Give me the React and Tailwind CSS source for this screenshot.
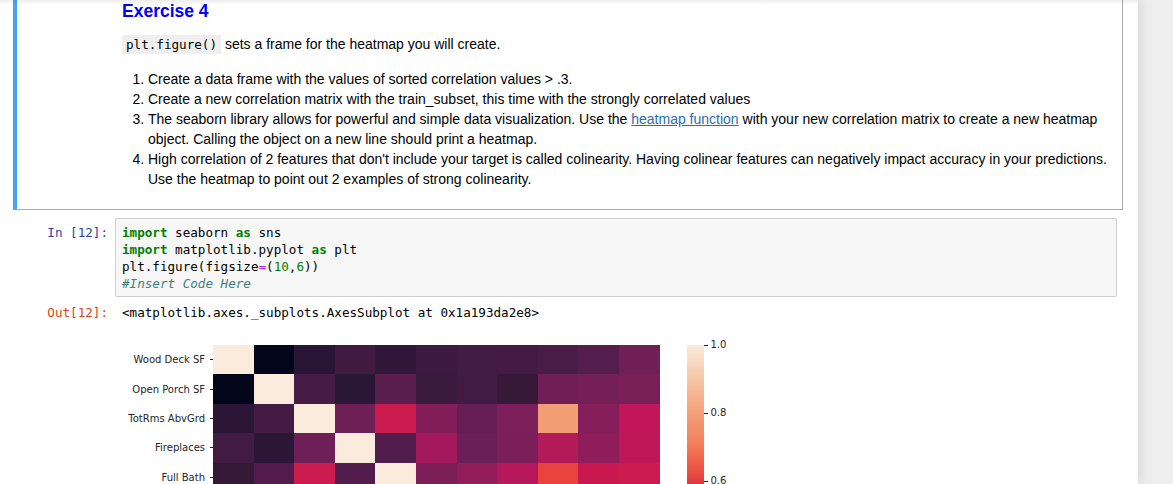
import React from 'react';

// colours read off the seaborn "rocket" heatmap, one row per feature
const CELLS = [
  ['#faebdd', '#03051a', '#291636', '#401a41', '#30173a', '#3d1a42', '#421b44', '#441b45', '#4a1c48', '#531d4d', '#701f57'],
  ['#03051a', '#faebdd', '#461b45', '#2a1636', '#5a1e4f', '#3b1a40', '#421b44', '#361839', '#721f57', '#741f58', '#7b1f59'],
  ['#2b1637', '#441b44', '#faebdd', '#6d1f56', '#cb1b4f', '#841e5a', '#651f54', '#7c1f5a', '#f49e76', '#851e5a', '#c1175a'],
  ['#411b43', '#2b1637', '#6f1f57', '#faebdd', '#511d4c', '#a3195b', '#6a1f56', '#7a1f59', '#b31a59', '#8f1d5b', '#be1858'],
  ['#361839', '#521d4d', '#cb1b4f', '#521d4d', '#faebdd', '#7c1f59', '#931c5b', '#b6185b', '#e8433f', '#c8184f', '#cc1c4f'],
];

const LABELS = ['Wood Deck SF', 'Open Porch SF', 'TotRms AbvGrd', 'Fireplaces', 'Full Bath'];
const TICKS = ['1.0', '0.8', '0.6'];

const kw = 'font-bold text-[#008000]';

export default function App() {
  return (
    <div className="flex h-[484px] overflow-hidden bg-[#eeeeee] font-['Liberation_Sans',Arial,sans-serif] text-[14px] text-black">
      <div className="relative w-[1138px] shrink-0 bg-white pl-[12px] pr-[15px] shadow-[0_0_12px_1px_rgba(87,87,87,0.2)]">
        <div className="pointer-events-none absolute inset-x-0 top-0 h-[5px] bg-gradient-to-b from-black/[0.07] to-transparent" />

        {/* Markdown cell (selected) */}
        <div className="ml-[1px] border border-t-0 border-[#ababab] border-l-[4px] border-l-[#42a5f5] pb-[20px] pl-[105px] pr-[6px]">
          <h3 className="text-[17.5px] font-bold leading-[22px] text-[#0000ff]">Exercise 4</h3>
          <p className="mt-[12px] leading-[20px]">
            <code className="bg-[#efefef] px-[4px] py-[2px] font-['DejaVu_Sans_Mono',monospace] text-[12.6px]">plt.figure()</code>{' '}
            sets a frame for the heatmap you will create.
          </p>
          <ol className="mt-[14px] list-decimal pl-[26px] leading-[20px]">
            <li>Create a data frame with the values of sorted correlation values &gt; .3.</li>
            <li>Create a new correlation matrix with the train_subset, this time with the strongly correlated values</li>
            <li>
              The seaborn library allows for powerful and simple data visualization. Use the{' '}
              <a className="text-[#296eaa] underline">heatmap function</a> with your new correlation matrix to create a new
              heatmap object. Calling the object on a new line should print a heatmap.
            </li>
            <li>
              High correlation of 2 features that don't include your target is called colinearity. Having colinear features
              can negatively impact accuracy in your predictions. Use the heatmap to point out 2 examples of strong
              colinearity.
            </li>
          </ol>
        </div>

        {/* Code cell */}
        <div className="mt-[8px] flex font-['DejaVu_Sans_Mono',monospace] text-[12.6px] leading-[17px]">
          <div className="w-[103px] shrink-0 whitespace-pre pr-[7px] pt-[5.5px] text-right text-[#303f9f]">In [12]:</div>
          <div className="mr-[6px] flex-1 whitespace-pre rounded-[2px] border border-[#cfcfcf] bg-[#f7f7f7] px-[6px] py-[4.5px]">
            <div>
              <span className={kw}>import</span> seaborn <span className={kw}>as</span> sns
            </div>
            <div>
              <span className={kw}>import</span> matplotlib.pyplot <span className={kw}>as</span> plt
            </div>
            <div>
              plt.figure(figsize<span className="text-[#aa22ff]">=</span>(<span className="text-[#008000]">10</span>,
              <span className="text-[#008000]">6</span>))
            </div>
            <div className="italic text-[#408080]">#Insert Code Here</div>
          </div>
        </div>

        {/* Output */}
        <div className="mt-[6.5px] flex font-['DejaVu_Sans_Mono',monospace] text-[12.6px] leading-[17px]">
          <div className="w-[103px] shrink-0 pr-[7px] text-right text-[#d84315]">Out[12]:</div>
          <div className="whitespace-pre pl-[7px]">&lt;matplotlib.axes._subplots.AxesSubplot at 0x1a193da2e8&gt;</div>
        </div>

        {/* Heatmap figure */}
        <div className="mt-[24.5px] flex items-start pl-[110px] font-['DejaVu_Sans',sans-serif] text-[10px] text-[#262626]">
          <div className="flex w-[91px] flex-col">
            {LABELS.map((l) => (
              <div key={l} className="flex h-[29.4px] items-center justify-end whitespace-nowrap">
                <span>{l}</span>
                <span className="ml-[5px] h-px w-[3px] bg-[#262626]" />
              </div>
            ))}
          </div>
          <div className="grid auto-rows-[29.4px] grid-cols-[repeat(11,40.6px)]">
            {CELLS.flat().map((c, i) => (
              <div key={i} style={{ backgroundColor: c }} />
            ))}
          </div>
          <div className="ml-[27.4px] flex">
            <div className="h-[200px] w-[17px] bg-[linear-gradient(to_bottom,#faebdd_0px,#f7d3bb_22px,#f6b994_46px,#f5a07a_68px,#f37d5b_100px,#ec5343_124px,#e23c40_136px,#c9204e_170px,#a8195a_200px)]" />
            <div className="-mt-[6px] flex flex-col gap-[56px]">
              {TICKS.map((t) => (
                <div key={t} className="flex h-[12px] items-center">
                  <span className="h-px w-[4px] bg-[#262626]" />
                  <span className="ml-[2.5px] leading-[12px]">{t}</span>
                </div>
              ))}
            </div>
          </div>
        </div>
      </div>
    </div>
  );
}
